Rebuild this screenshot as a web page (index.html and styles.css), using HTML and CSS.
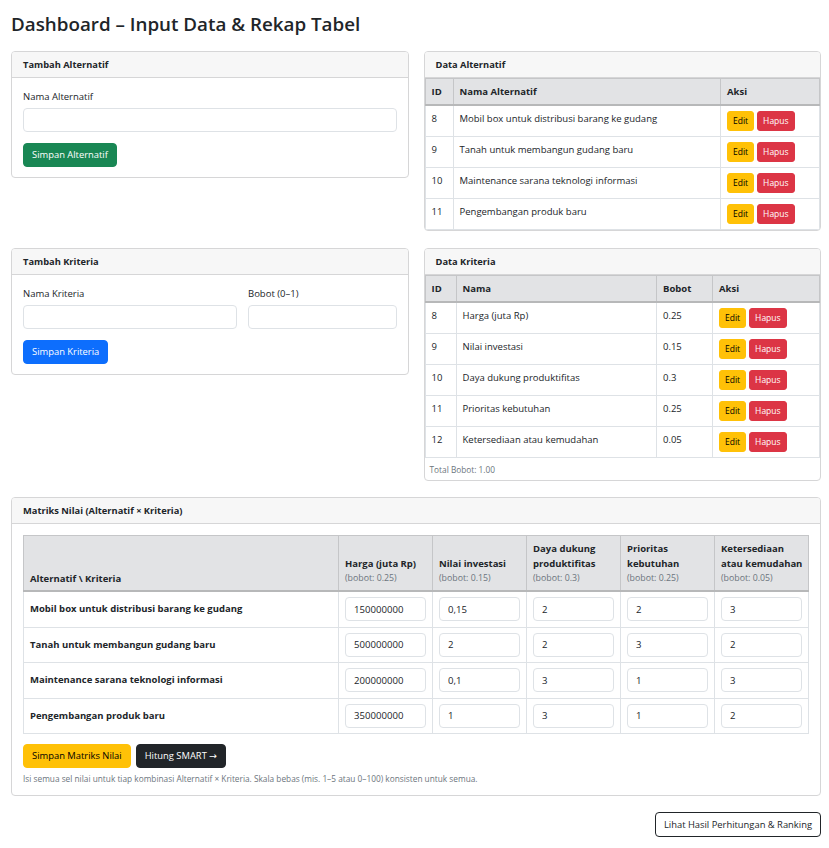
FILE: index.html
```html
<!DOCTYPE html>
<html lang="id">
<head>
<meta charset="utf-8">
<title>Dashboard</title>
<link rel="stylesheet" href="styles.css">
</head>
<body>
<div class="page">
  <h1 class="title">Dashboard – Input Data &amp; Rekap Tabel</h1>

  <div class="grid2 row-first">
    <section class="card">
      <div class="card-header">Tambah Alternatif</div>
      <div class="card-body">
        <label class="label">Nama Alternatif</label>
        <input class="input mb" type="text">
        <button class="btn btn-success">Simpan Alternatif</button>
      </div>
    </section>

    <section class="card">
      <div class="card-header">Data Alternatif</div>
      <table class="table">
        <thead>
          <tr><th class="w-id-a">ID</th><th>Nama Alternatif</th><th class="w-aksi-a">Aksi</th></tr>
        </thead>
        <tbody>
          <tr><td>8</td><td>Mobil box untuk distribusi barang ke gudang</td><td><div class="actions"><button class="btn btn-sm btn-warning">Edit</button><button class="btn btn-sm btn-danger">Hapus</button></div></td></tr>
          <tr><td>9</td><td>Tanah untuk membangun gudang baru</td><td><div class="actions"><button class="btn btn-sm btn-warning">Edit</button><button class="btn btn-sm btn-danger">Hapus</button></div></td></tr>
          <tr><td>10</td><td>Maintenance sarana teknologi informasi</td><td><div class="actions"><button class="btn btn-sm btn-warning">Edit</button><button class="btn btn-sm btn-danger">Hapus</button></div></td></tr>
          <tr><td>11</td><td>Pengembangan produk baru</td><td><div class="actions"><button class="btn btn-sm btn-warning">Edit</button><button class="btn btn-sm btn-danger">Hapus</button></div></td></tr>
        </tbody>
      </table>
    </section>
  </div>

  <div class="grid2 row-second">
    <section class="card">
      <div class="card-header">Tambah Kriteria</div>
      <div class="card-body">
        <div class="form-row mb">
          <div>
            <label class="label">Nama Kriteria</label>
            <input class="input" type="text">
          </div>
          <div>
            <label class="label">Bobot (0–1)</label>
            <input class="input" type="text">
          </div>
        </div>
        <button class="btn btn-primary">Simpan Kriteria</button>
      </div>
    </section>

    <section class="card">
      <div class="card-header">Data Kriteria</div>
      <table class="table">
        <thead>
          <tr><th class="w-id-k">ID</th><th>Nama</th><th class="w-bobot">Bobot</th><th class="w-aksi-k">Aksi</th></tr>
        </thead>
        <tbody>
          <tr><td>8</td><td>Harga (juta Rp)</td><td>0.25</td><td><div class="actions"><button class="btn btn-sm btn-warning">Edit</button><button class="btn btn-sm btn-danger">Hapus</button></div></td></tr>
          <tr><td>9</td><td>Nilai investasi</td><td>0.15</td><td><div class="actions"><button class="btn btn-sm btn-warning">Edit</button><button class="btn btn-sm btn-danger">Hapus</button></div></td></tr>
          <tr><td>10</td><td>Daya dukung produktifitas</td><td>0.3</td><td><div class="actions"><button class="btn btn-sm btn-warning">Edit</button><button class="btn btn-sm btn-danger">Hapus</button></div></td></tr>
          <tr><td>11</td><td>Prioritas kebutuhan</td><td>0.25</td><td><div class="actions"><button class="btn btn-sm btn-warning">Edit</button><button class="btn btn-sm btn-danger">Hapus</button></div></td></tr>
          <tr><td>12</td><td>Ketersediaan atau kemudahan</td><td>0.05</td><td><div class="actions"><button class="btn btn-sm btn-warning">Edit</button><button class="btn btn-sm btn-danger">Hapus</button></div></td></tr>
        </tbody>
      </table>
      <div class="foot-note">Total Bobot: 1.00</div>
    </section>
  </div>

  <section class="card">
    <div class="card-header">Matriks Nilai (Alternatif × Kriteria)</div>
    <div class="card-body">
      <table class="table matrix">
        <colgroup>
          <col>
          <col class="w-crit">
          <col class="w-crit">
          <col class="w-crit">
          <col class="w-crit">
          <col class="w-crit">
        </colgroup>
        <thead>
          <tr>
            <th>Alternatif \ Kriteria</th>
            <th>Harga (juta Rp)<span class="sub">(bobot: 0.25)</span></th>
            <th>Nilai investasi<span class="sub">(bobot: 0.15)</span></th>
            <th>Daya dukung<br>produktifitas<span class="sub">(bobot: 0.3)</span></th>
            <th>Prioritas<br>kebutuhan<span class="sub">(bobot: 0.25)</span></th>
            <th>Ketersediaan<br>atau kemudahan<span class="sub">(bobot: 0.05)</span></th>
          </tr>
        </thead>
        <tbody>
          <tr>
            <th class="row-head">Mobil box untuk distribusi barang ke gudang</th>
            <td><input class="input" type="text" value="150000000"></td>
            <td><input class="input" type="text" value="0,15"></td>
            <td><input class="input" type="text" value="2"></td>
            <td><input class="input" type="text" value="2"></td>
            <td><input class="input" type="text" value="3"></td>
          </tr>
          <tr>
            <th class="row-head">Tanah untuk membangun gudang baru</th>
            <td><input class="input" type="text" value="500000000"></td>
            <td><input class="input" type="text" value="2"></td>
            <td><input class="input" type="text" value="2"></td>
            <td><input class="input" type="text" value="3"></td>
            <td><input class="input" type="text" value="2"></td>
          </tr>
          <tr>
            <th class="row-head">Maintenance sarana teknologi informasi</th>
            <td><input class="input" type="text" value="200000000"></td>
            <td><input class="input" type="text" value="0,1"></td>
            <td><input class="input" type="text" value="3"></td>
            <td><input class="input" type="text" value="1"></td>
            <td><input class="input" type="text" value="3"></td>
          </tr>
          <tr>
            <th class="row-head">Pengembangan produk baru</th>
            <td><input class="input" type="text" value="350000000"></td>
            <td><input class="input" type="text" value="1"></td>
            <td><input class="input" type="text" value="3"></td>
            <td><input class="input" type="text" value="1"></td>
            <td><input class="input" type="text" value="2"></td>
          </tr>
        </tbody>
      </table>
      <div class="matrix-actions">
        <button class="btn btn-warning">Simpan Matriks Nilai</button>
        <button class="btn btn-dark">Hitung SMART →</button>
      </div>
      <p class="note">Isi semua sel nilai untuk tiap kombinasi Alternatif × Kriteria. Skala bebas (mis. 1–5 atau 0–100) konsisten untuk semua.</p>
    </div>
  </section>

  <div class="footer-actions">
    <button class="btn btn-outline-dark">Lihat Hasil Perhitungan &amp; Ranking</button>
  </div>
</div>
</body>
</html>
```

FILE: styles.css
```css
* { box-sizing: border-box; }

body {
  margin: 0;
  font-family: "Open Sans", "Noto Sans", "DejaVu Sans", sans-serif;
  font-size: 9.5px;
  line-height: 1.5;
  color: #212529;
  background: #fff;
}

.page {
  padding: 12px 8px 20px 11px;
}

.title {
  font-size: 18.8px;
  font-weight: 600;
  line-height: 24px;
  margin: 0 0 15px;
}

.grid2 {
  display: grid;
  grid-template-columns: 1fr 1fr;
  gap: 15px;
  align-items: start;
}
.row-first { margin-bottom: 17px; }
.row-second { margin-bottom: 16px; }

.card {
  border: 1px solid #d6d6d7;
  border-radius: 4px;
  background: #fff;
  overflow: hidden;
}

.card-header {
  background: #f7f7f7;
  border-bottom: 1px solid #d6d6d7;
  padding: 5px 11px;
  font-weight: 700;
  font-size: 9.3px;
  line-height: 15px;
}

.card-body {
  padding: 11px 11px 10px;
}

.label {
  display: block;
  line-height: 16px;
  margin-bottom: 3px;
}

.input {
  display: block;
  width: 100%;
  height: 24px;
  border: 1px solid #dee2e6;
  border-radius: 4px;
  padding: 0 8px;
  font-family: inherit;
  font-size: 9.6px;
  color: #212529;
  background: #fff;
}

.mb { margin-bottom: 11px; }

.form-row {
  display: grid;
  grid-template-columns: 214px 1fr;
  gap: 11px;
}

.btn {
  display: inline-block;
  height: 24px;
  line-height: 22px;
  padding: 0 8px;
  border: 1px solid transparent;
  border-radius: 4px;
  font-family: inherit;
  font-size: 9.4px;
  cursor: pointer;
  white-space: nowrap;
}
.btn-success { background: #198754; border-color: #198754; color: #fff; }
.btn-primary { background: #0d6efd; border-color: #0d6efd; color: #fff; }
.btn-warning { background: #ffc107; border-color: #ffc107; color: #000; }
.btn-danger { background: #dc3545; border-color: #dc3545; color: #fff; }
.btn-dark { background: #212529; border-color: #212529; color: #fff; }
.btn-outline-dark { background: #fff; border-color: #212529; color: #212529; height: 25px; line-height: 23px; }

.btn-sm {
  height: 20px;
  line-height: 18px;
  padding: 0 5px;
  font-size: 8.5px;
  border-radius: 3px;
}

.actions {
  display: flex;
  gap: 3px;
}

.table {
  width: 100%;
  border-collapse: collapse;
}
.table th,
.table td {
  border: 1px solid #dee2e6;
  padding: 5px 6px;
  text-align: left;
  vertical-align: top;
  line-height: 16px;
}
.table thead th {
  background: #e2e3e5;
  border-color: #c5c6c8;
  border-bottom: 2px solid #b7b8b9;
  font-weight: 700;
  padding-top: 4.5px;
  padding-bottom: 4.5px;
}

.w-id-a { width: 28px; }
.w-aksi-a { width: 99px; }
.w-id-k { width: 31px; }
.w-bobot { width: 56px; }
.w-aksi-k { width: 107px; }

.foot-note {
  padding: 4.5px 5px;
  font-size: 8.3px;
  line-height: 13px;
  color: #6c757d;
}

.matrix {
  table-layout: fixed;
}
.matrix th,
.matrix td {
  padding: 5.25px 6px;
}
.matrix thead th {
  vertical-align: bottom;
  line-height: 15px;
  padding: 4.5px 6px;
  white-space: nowrap;
}
.w-crit { width: 94px; }
.sub {
  display: block;
  font-weight: 400;
  font-size: 8.8px;
  color: #6c757d;
}
.matrix tbody td,
.matrix tbody th {
  vertical-align: middle;
}
.row-head {
  font-weight: 700;
}

.matrix-actions {
  display: flex;
  gap: 5px;
  margin-top: 10px;
}

.note {
  margin: 5px 0 0;
  font-size: 8.3px;
  line-height: 12px;
  color: #6c757d;
}

.footer-actions {
  display: flex;
  justify-content: flex-end;
  margin-top: 16px;
}
```
